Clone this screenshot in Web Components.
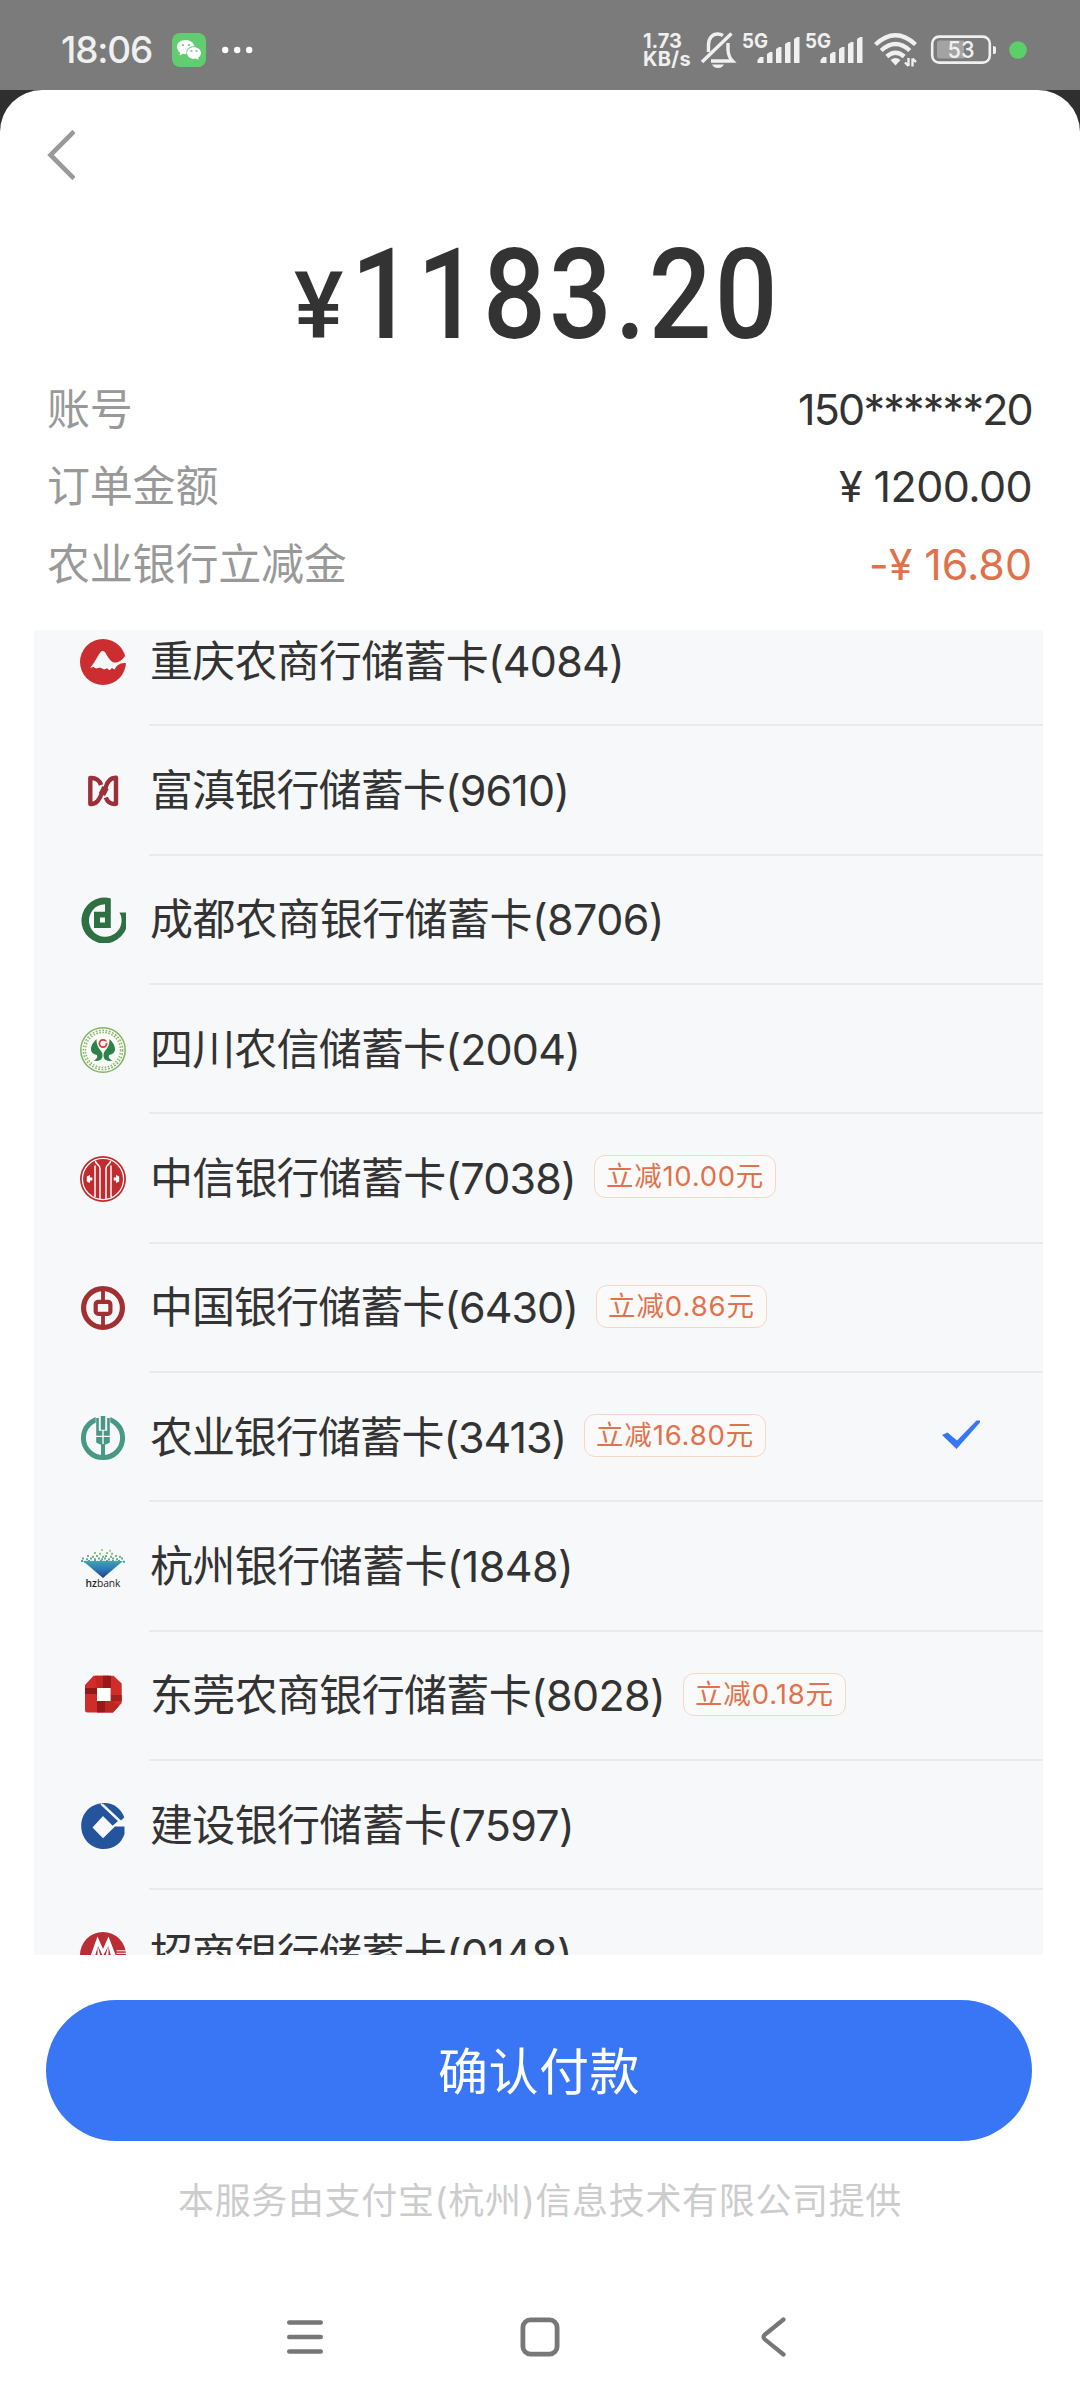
<!DOCTYPE html>
<html lang="zh-CN">
<head>
<meta charset="utf-8">
<title>确认付款</title>
<style>
  body {
    margin: 0;
    background: #2f2f2f;
    font-family: Inter, "Noto Sans CJK SC", sans-serif;
    color: #333;
  }
</style>
</head>
<body>
<pay-screen></pay-screen>

<script>
// Bank logos, all drawn on a 46x46 grid
const LOGOS = {
  cqrcb: `
    <circle cx="23" cy="23" r="23" fill="#cb2d30"/>
    <path d="M10 28.800 C14 25 17.500 17 20.500 13.300 Q22.700 10.500 25 13.300 C28 18 30 22.500 34 23.500 C38 24 42 21.500 44.500 17.500 L47 18 V24.300 C43 23.500 39.500 24.500 36.800 27 L34.500 30.500 L32 29 L29.500 31.300 L27 29.300 L24 30.500 L20 28.500 L16 29.500 L13.500 28 Z" fill="#f7f8fa"/>`,
  fudian: `
    <g fill="none" stroke="#9c3038" stroke-width="4.400" stroke-linejoin="round">
      <path d="M21 17 C19.500 12 16 9.800 10.300 10 V36 C17 36.500 19.500 31 21.500 26 L25.500 20 C27 14 30 9.600 36 9.800 V35.800 C31 36.500 27.500 34 25.800 29.500"/>
      <path d="M22 26.500 L25.500 19.500" stroke-width="7"/>
    </g>`,
  cdrcb: `
    <path d="M30.800 1.400 A23 23 0 1 0 46 15.500 L39.500 15.500 A16.300 16.300 0 1 1 25 7.200 V14.700 H14 V31 H30.800 Z M20 20.500 H25 V25.500 H20 Z" fill="#2f7042" fill-rule="evenodd"/>`,
  scrcu: `
    <circle cx="23" cy="23" r="22.200" fill="#fafcf6" stroke="#83b266" stroke-width="1.500"/>
    <circle cx="23" cy="23" r="18.600" fill="none" stroke="#86b46a" stroke-width="3.600" stroke-dasharray="1.700 1.500"/>
    <circle cx="23" cy="23" r="18.600" fill="none" stroke="#fafcf6" stroke-width=".7"/>
    <circle cx="23" cy="16.500" r="3.600" fill="none" stroke="#cf3f48" stroke-width="1.800"/>
    <path d="M24.500 15.300 H27" stroke="#fafcf6" stroke-width="1.600"/>
    <path d="M16.500 12 C9 19 9 27 17 28 C18 31 16 32.500 13.500 33.500 C20 35 23.500 32 22.300 26.500 C21 22 16.500 21.500 16.500 12 Z M29.500 12 C37 19 37 27 29 28 C28 31 30 32.500 32.500 33.500 C26 35 22.500 32 23.700 26.500 C25 22 29.500 21.500 29.500 12 Z" fill="#2d8249"/>`,
  citic: `
    <circle cx="23" cy="23" r="23" fill="#c22b2d"/>
    <circle cx="23" cy="23" r="20.600" fill="none" stroke="#fff" stroke-width="1.300"/>
    <g fill="none" stroke="#fff" stroke-width="1.500">
      <path d="M15.300 5 C16 9 20 8.500 20 12.500 V43"/>
      <path d="M30.700 5 C30 9 26 8.500 26 12.500 V43"/>
      <path d="M15 9.500 V41"/><path d="M31 9.500 V41"/>
    </g>
    <path d="M6.800 20.500 L10 19 V21.600 H12.300 V24.400 H10 V27 L6.800 25.500 Z M39.200 20.500 L36 19 V21.600 H33.700 V24.400 H36 V27 L39.200 25.500 Z" fill="#fff"/>`,
  boc: `
    <circle cx="23" cy="23" r="19.400" fill="none" stroke="#a03032" stroke-width="5.200"/>
    <path d="M23 4 V16 M23 30 V42" stroke="#a03032" stroke-width="3.800"/>
    <rect x="15.700" y="16.800" width="14.700" height="12" rx="2.600" fill="none" stroke="#a03032" stroke-width="4.200"/>`,
  abc: `
    <circle cx="23" cy="23" r="19.600" fill="none" stroke="#479884" stroke-width="5"/>
    <path d="M15.700 0 H30.300 V8 H15.700 Z" fill="#f7f8fa"/>
    <path d="M20.800 1 H25.200 V14.700 H20.800 Z M16.200 3 H18.800 V15.700 H22.300 V20.800 H16.200 Z M27.200 3 H29.800 V20.800 H23.700 V15.700 H27.200 Z M16.200 22 H22.300 V29.500 H20 L16.200 27.500 Z M23.700 22 H29.800 V27.500 L26 29.500 H23.700 Z M21 29 H25 V42 H21 Z" fill="#479884"/>`,
  ccb: `
    <path d="M24 0.200 C11 0 1.200 10 1.200 23 C1.200 36 11.500 46 23.500 46 C34 46 41.500 40.500 44.500 31 V23.500 H35 L23 35.300 L12.500 24.500 L23 13 L32.700 22.800 L38.500 17.500 L22 2.800 Z" fill="#24559c"/>
    <path d="M22.500 0 L41 17.500 L44.300 14.200 C41 6 33.500 0 25 0 Z" fill="#24559c"/>
    <path d="M21 .8 L39 18" stroke="#f7f8fa" stroke-width="1.700"/>`,
  cmb: `
    <circle cx="23" cy="23" r="23" fill="#b92d35"/>
    <path d="M10.500 24 L17.500 4.500 L23 17 L28.500 4.500 L36 24 H31 L28.300 14 L23 24 L18 14 L15 24 Z" fill="#fff"/>
    <path d="M17.500 24 V13 L20.500 24 Z M28.500 24 V13 L25.500 24 Z" fill="#fff"/>
    <path d="M36.500 18.800 H46 M36.500 21.300 H46" stroke="#fff" stroke-width="1"/>`,
  drcb: `
    <path d="M13.500 2.800 H33.500 L41.700 10.500 V30 L33 39.500 H7.500 Q5 39.500 5 37 V12 Z" fill="#d02c29"/>
    <path d="M15 2.800 H29 V15 H17 Z" fill="#c5251f"/>
    <path d="M23 2.800 H31 V15 H23 Z" fill="#951b1b"/>
    <path d="M5 15 H17 V21 H5 Z" fill="#901819"/>
    <path d="M30.500 22 H41.700 V28 H30.500 Z" fill="#a41f1f"/>
    <path d="M17 28 H25 V39.500 H17 Z" fill="#98191a"/>
    <path d="M25 28 H33 L39 33 L33 39.500 H25 Z" fill="#bb2822"/>
    <rect x="17" y="15" width="13.600" height="13" fill="#fff"/>`,
  // the scattered squares on top of the diamond are generated below
  hzbank: `
    <defs><linearGradient id="g" x1="0" y1="0" x2="0" y2="1">
      <stop offset="0" stop-color="#43a0ad"/><stop offset=".45" stop-color="#2d7cba"/><stop offset="1" stop-color="#213f86"/>
    </linearGradient></defs>
    <path d="M3 17 H43 L23 34 Z" fill="url(#g)"/>
    ${hzDots()}
    <text x="23" y="42.500" text-anchor="middle" font-size="10.500" textLength="35" lengthAdjust="spacingAndGlyphs" fill="#222" font-family="Open Sans, sans-serif"><tspan font-weight="600">hz</tspan>bank</text>`
};

function hzDots() {
  const rows = [
    [5, "#a8cf8a", [21, 29]],
    [8, "#8cc07c", [14, 19, 26, 31]],
    [11, "#74b581", [7, 12, 16, 22, 25, 30, 35, 39]],
    [13.5, "#62b08f", [2, 6, 10, 14, 18, 21, 24, 28, 32, 36, 41]],
    [16, "#4ba4a3", [1, 4, 8, 11, 14, 17, 20, 23, 26, 29, 32, 35, 38, 43]]
  ];
  return rows.map(([y, fill, xs]) => xs.map((x, i) =>
    `<rect x="${x}" y="${y + (i % 2) * 0.8}" width="2" height="2" fill="${fill}"/>`).join("")).join("");
}

// A line of text tracked in or out so that it takes the given width
class FitText extends HTMLElement {
  constructor() {
    super();
    this.attachShadow({ mode: "open" });
    this.shadowRoot.innerHTML = `
      <style>
        :host { display: block; white-space: nowrap; }
        span { display: inline-block; white-space: pre; }
      </style>
      <span><slot></slot></span>
    `;
  }

  connectedCallback() {
    const width = Number(this.getAttribute("width"));
    const span = this.shadowRoot.querySelector("span");
    if (!width) return;
    // offsetWidth would round, and a transform would change getBoundingClientRect
    const natural = parseFloat(getComputedStyle(span).width);
    const gap = (width - natural) / this.textContent.length;
    span.style.letterSpacing = gap.toFixed(3) + "px";
    this.style.width = width + "px";
  }
}

class BankLogo extends HTMLElement {
  constructor() {
    super();
    this.attachShadow({ mode: "open" });
  }

  connectedCallback() {
    this.shadowRoot.innerHTML = `
      <style>
        :host { display: block; width: 46px; height: 46px; }
        svg { display: block; }
      </style>
      <svg width="46" height="46" viewBox="0 0 46 46">${LOGOS[this.getAttribute("name")]}</svg>
    `;
  }
}

class StatusBar extends HTMLElement {
  constructor() {
    super();
    this.attachShadow({ mode: "open" });
    const signal = `
      <svg width="58" height="36" viewBox="0 0 58 36" fill="#f0f0f0">
        <text x="0" y="16" font-size="20" font-weight="700" textLength="26" lengthAdjust="spacingAndGlyphs">5G</text>
        <path d="M15.500 31 V28 L18 25 H21.500 V31 Z M25 31 V22 L28 20 H30.500 V31 Z M34 31 V17 L37 15 H39.500 V31 Z M43 31 V12 L46 10 H48.500 V31 Z M52 31 V7 L55 5 H57.500 V31 Z"/>
      </svg>`;
    this.shadowRoot.innerHTML = `
      <style>
        :host {
          display: flex;
          justify-content: space-between;
          align-items: center;
          box-sizing: border-box;
          height: 90px;
          padding: 10px 53px 0 61px;
          background: #7b7b7b;
          color: #f0f0f0;
        }
        div { display: flex; align-items: center; }
        svg { display: block; flex: none; overflow: visible; }
        .time { font-size: 37px; font-weight: 450; line-height: 40px; }
        .wechat { margin: 0 16px 0 20px; }
        .speed {
          display: block;
          width: 48px;
          font-size: 20px;
          font-weight: 700;
          line-height: 18.500px;
        }
        .bell { margin: 0 7px 0 10px; }
        .second { margin-left: 5px; }
        .wifi { margin: 0 14px 0 11px; }
        .battery { margin-right: 12px; }
      </style>
      <div>
        <fit-text class="time" width="91">18:06</fit-text>
        <svg class="wechat" width="34" height="34" viewBox="0 0 34 34">
          <rect width="34" height="34" rx="8" fill="#62cd70"/>
          <path d="M13.500 7 C8.500 7 5 10.200 5 14 C5 16.200 6.200 18.200 8 19.500 L7.500 22.500 L11 20.800 Q13 21.300 14.500 21 C13.500 16 18 12.800 22.500 13.200 C21.500 9.500 18 7 13.500 7 Z" fill="#fff"/>
          <path d="M22 14.200 C17.800 14.200 15 16.800 15 20 C15 23.300 18 25.800 22 25.800 L24 25.500 L26.500 27 L26.200 24.500 C28 23.500 29 21.800 29 20 C29 16.800 26 14.200 22 14.200 Z" fill="#fff"/>
          <g fill="#62cd70"><circle cx="11" cy="12" r="1.100"/><circle cx="17" cy="12" r="1.100"/><circle cx="19.500" cy="18" r="1"/><circle cx="24.500" cy="18" r="1"/></g>
        </svg>
        <svg width="31" height="8" viewBox="0 0 31 8" fill="#fff">
          <circle cx="3.200" cy="4" r="3.200"/><circle cx="15.200" cy="4" r="3.200"/><circle cx="27.200" cy="4" r="3.200"/>
        </svg>
      </div>
      <div>
        <div class="speed"><fit-text width="39">1.73</fit-text><fit-text width="48">KB/s</fit-text></div>
        <svg class="bell" width="34" height="36" viewBox="0 0 34 36" fill="none" stroke="#f0f0f0" stroke-width="3.400">
          <path d="M7.500 20 V13 C7.500 6 11.500 2 16.800 2 Q19.500 2 22 3.500"/>
          <path d="M27 11 V18 Q27.500 25 31.500 29 H10"/>
          <path d="M1 30 L30.500 1.500"/>
          <path d="M11 32.500 H23 Q21 36 17 36 Q13 36 11 32.500 Z" fill="#f0f0f0" stroke="none"/>
        </svg>
        ${signal}
        <div class="second">${signal}</div>
        <svg class="wifi" width="43" height="34" viewBox="0 0 43 34" fill="none" stroke="#f0f0f0" stroke-width="4.300">
          <path d="M1.500 11.500 Q21.500 -7 41.500 11.500"/>
          <path d="M7.200 17.500 Q21.500 4.500 35.800 17.500"/>
          <path d="M12.800 23.500 Q21.500 16 30.200 23.500"/>
          <path d="M16.500 27 Q21.500 23 26.500 27 L21.500 32.500 Z" fill="#f0f0f0" stroke="none"/>
          <path d="M34.500 25 V33 M31 29.500 L34.500 33 M38.500 33.500 V25.500 M38.500 25.500 L42 29" stroke-width="2.400"/>
        </svg>
        <svg class="battery" width="66" height="30" viewBox="0 0 66 30">
          <rect x="1.200" y="1.600" width="57.600" height="26" rx="7" fill="none" stroke="#f0f0f0" stroke-width="2.600"/>
          <path d="M6 8 Q6 5.500 8.500 5.500 H33 V23.500 H8.500 Q6 23.500 6 21 Z" fill="#a3a3a3"/>
          <path d="M62 11 Q65 11 65 13 V17 Q65 19 62 19 Z" fill="#f0f0f0"/>
          <text x="30" y="23" text-anchor="middle" font-size="23.500" font-weight="500" textLength="27" lengthAdjust="spacingAndGlyphs" fill="#f0f0f0">53</text>
        </svg>
        <svg width="18" height="18" viewBox="0 0 18 18"><circle cx="9" cy="9" r="8.800" fill="#5bd069"/></svg>
      </div>
    `;
  }
}

class DetailRow extends HTMLElement {
  constructor() {
    super();
    this.attachShadow({ mode: "open" });
    this.shadowRoot.innerHTML = `
      <style>
        :host {
          display: flex;
          justify-content: space-between;
          align-items: center;
          height: 77.500px;
          font-size: 43px;
          line-height: 60px;
        }
        .label { color: #999; letter-spacing: -.2px; }
        .value { color: var(--value-color, #333); }
      </style>
      <div class="label"><slot name="label"></slot></div>
      <div class="value"><slot></slot></div>
    `;
  }
}

class CardRow extends HTMLElement {
  constructor() {
    super();
    this.attachShadow({ mode: "open" });
  }

  connectedCallback() {
    const off = this.getAttribute("off");
    this.shadowRoot.innerHTML = `
      <style>
        :host {
          display: flex;
          align-items: center;
          height: 129.330px;
          padding-left: 46px;
        }
        .body {
          flex: 1;
          display: flex;
          align-items: center;
          box-sizing: border-box;
          height: 100%;
          margin-left: 23px;
          border-bottom: 2px solid #e8eaed;
        }
        .name {
          font-size: 43px;
          line-height: 60px;
          margin: 0 18px 0 1px;
        }
        .off {
          box-sizing: border-box;
          height: 43px;
          padding: 0 11px;
          margin-bottom: 2px;
          border: 1.500px solid #f6d6c6;
          border-radius: 11px;
          background: #fbfafa;
          color: #e0724c;
          font-size: 27.500px;
          line-height: 40px;
        }
        .tick { display: block; margin: 0 63px 3px auto; }
      </style>
      <bank-logo name="${this.getAttribute("bank")}"></bank-logo>
      <div class="body">
        <fit-text class="name" width="${this.getAttribute("width")}">${this.textContent.trim()}</fit-text>
        ${off ? `<div class="off"><fit-text width="${this.getAttribute("off-width")}">立减${off}元</fit-text></div>` : ""}
        ${this.hasAttribute("selected") ? `
          <svg class="tick" width="38" height="30" viewBox="0 0 38 30">
            <path d="M0 15 L5.500 12.500 L15 20.500 L34.500 .5 H38 V2.500 L14.500 29 Z" fill="#3777f6"/>
          </svg>` : ""}
      </div>
    `;
  }
}

class CardList extends HTMLElement {
  constructor() {
    super();
    this.attachShadow({ mode: "open" });
    this.shadowRoot.innerHTML = `
      <style>
        :host {
          display: block;
          flex: none;
          height: 1325px;
          margin: 0 37px 0 34px;
          overflow: hidden;
          background: #f7f8fa;
        }
        /* the list is scrolled a little past its first row's top */
        .scroll { margin-top: -32.500px; }
      </style>
      <div class="scroll"><slot></slot></div>
    `;
  }
}

class NavBar extends HTMLElement {
  constructor() {
    super();
    this.attachShadow({ mode: "open" });
    this.shadowRoot.innerHTML = `
      <style>
        :host {
          display: flex;
          justify-content: space-between;
          align-items: center;
          height: 60px;
          padding: 0 285px;
        }
        svg { display: block; }
      </style>
      <svg width="40" height="40" viewBox="0 0 40 40" fill="none" stroke="#777" stroke-width="4.600" stroke-linecap="round">
        <path d="M4.300 5.500 H35.700 M4.300 20 H35.700 M4.300 34.500 H35.700"/>
      </svg>
      <svg width="40" height="40" viewBox="0 0 40 40" fill="none" stroke="#777" stroke-width="4.800">
        <rect x="2.900" y="2.900" width="34.200" height="34.200" rx="7.500"/>
      </svg>
      <svg width="40" height="40" viewBox="0 0 40 40" fill="none" stroke="#777" stroke-width="4.200" stroke-linecap="round">
        <path d="M28.500 2.500 L10 17.500 Q7 20 10 22.500 L28.500 37.500"/>
      </svg>
    `;
  }
}

class PayScreen extends HTMLElement {
  constructor() {
    super();
    this.attachShadow({ mode: "open" });
    this.shadowRoot.innerHTML = `
      <style>
        :host { display: block; width: 1080px; height: 2400px; overflow: hidden; }
        main {
          display: flex;
          flex-direction: column;
          height: 2310px;
          border-radius: 42px 42px 0 0;
          background: #fff;
        }
        .back { display: block; margin: 40px 0 0 47px; flex: none; }
        .amount {
          display: flex;
          align-items: baseline;
          height: 150px;
          margin-top: 40px;
          padding-left: 294px;
          font-family: Roboto, sans-serif;
          font-weight: 500;
          line-height: 150px;
        }
        .amount span { font-size: 93px; margin-right: 8px; }
        /* condensed figures */
        .amount fit-text { font-size: 127px; transform: scaleX(.87); transform-origin: 0 0; }
        .details { padding: 0 48px 0 47px; height: 259.500px; flex: none; }
        button {
          width: 986px;
          height: 141px;
          margin: 45px auto 0 46px;
          padding: 0 0 5px;
          border: 0;
          border-radius: 71px;
          background: #3876f6;
          color: #fff;
          font: 400 50px/70px "Noto Sans CJK SC", sans-serif;
          letter-spacing: .5px;
          flex: none;
        }
        footer {
          display: flex;
          justify-content: center;
          margin-top: 35.500px;
          color: #ccc;
          font-size: 36px;
          line-height: 50px;
        }
        nav-bar { margin-top: 80.500px; }
      </style>
      <status-bar></status-bar>
      <main>
        <svg class="back" width="28" height="50" viewBox="0 0 28 50" fill="none" stroke="#999" stroke-width="4.600">
          <path d="M27 1.500 L3.500 25 L27 48.500"/>
        </svg>
        <div class="amount"><span>¥</span><fit-text width="494">1183.20</fit-text></div>
        <div class="details">
          <detail-row><span slot="label">账号</span><fit-text width="234">150******20</fit-text></detail-row>
          <detail-row><span slot="label">订单金额</span><fit-text width="193">¥ 1200.00</fit-text></detail-row>
          <detail-row style="--value-color: #e0714a"><span slot="label">农业银行立减金</span><fit-text width="163">-¥ 16.80</fit-text></detail-row>
        </div>
        <card-list>
          <card-row bank="cqrcb" width="474">重庆农商行储蓄卡(4084)</card-row>
          <card-row bank="fudian" width="419">富滇银行储蓄卡(9610)</card-row>
          <card-row bank="cdrcb" width="514">成都农商银行储蓄卡(8706)</card-row>
          <card-row bank="scrcu" width="430">四川农信储蓄卡(2004)</card-row>
          <card-row bank="citic" width="426" off="10.00" off-width="158">中信银行储蓄卡(7038)</card-row>
          <card-row bank="boc" width="428" off="0.86" off-width="147">中国银行储蓄卡(6430)</card-row>
          <card-row bank="abc" width="416" off="16.80" off-width="158" selected>农业银行储蓄卡(3413)</card-row>
          <card-row bank="hzbank" width="423">杭州银行储蓄卡(1848)</card-row>
          <card-row bank="drcb" width="515" off="0.18" off-width="139">东莞农商银行储蓄卡(8028)</card-row>
          <card-row bank="ccb" width="424">建设银行储蓄卡(7597)</card-row>
          <card-row bank="cmb" width="422">招商银行储蓄卡(0148)</card-row>
        </card-list>
        <button>确认付款</button>
        <footer><fit-text width="724">本服务由支付宝(杭州)信息技术有限公司提供</fit-text></footer>
        <nav-bar></nav-bar>
      </main>
    `;
  }
}

customElements.define("fit-text", FitText);
customElements.define("bank-logo", BankLogo);
customElements.define("status-bar", StatusBar);
customElements.define("detail-row", DetailRow);
customElements.define("card-row", CardRow);
customElements.define("card-list", CardList);
customElements.define("nav-bar", NavBar);
customElements.define("pay-screen", PayScreen);
</script>
</body>
</html>
